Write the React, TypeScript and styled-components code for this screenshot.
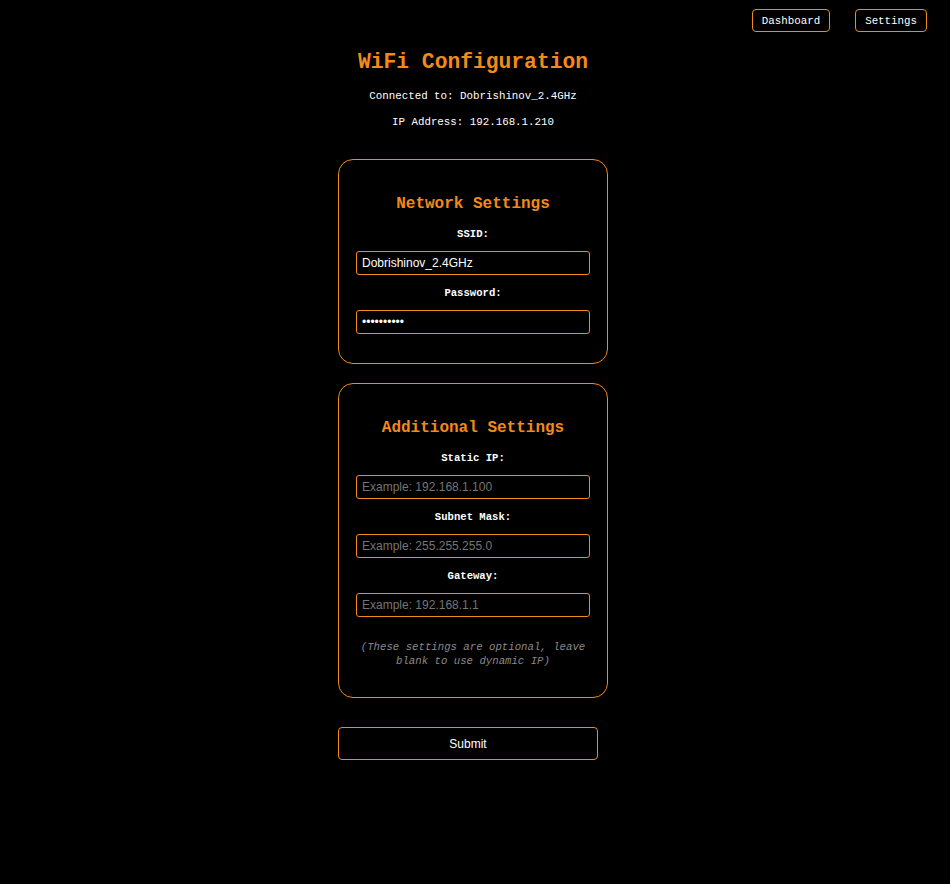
import React from 'react';
import styled, { createGlobalStyle } from 'styled-components';

const orange = '#f28a1a';
const mono = '"Liberation Mono", "DejaVu Sans Mono", monospace';
const sans = '"Liberation Sans", Arial, sans-serif';

const GlobalStyle = createGlobalStyle`
  html, body {
    margin: 0;
    padding: 0;
    background: #000;
    color: #fff;
    font-family: ${mono};
  }
  * { box-sizing: border-box; }
`;

const Page = styled.div`
  min-height: 884px;
  background: #000;
  padding-bottom: 40px;
`;

const Nav = styled.nav`
  display: flex;
  justify-content: flex-end;
  gap: 25px;
  padding: 9px 23px 0 0;
`;

const NavButton = styled.button`
  height: 23px;
  padding: 0 9px;
  background: #000;
  color: #fff;
  border: 1px solid ${orange};
  border-radius: 4px;
  font-family: ${mono};
  font-size: 10.8px;
  cursor: pointer;
`;

const Main = styled.main`
  width: 270px;
  margin: 18px auto 0;
  display: flex;
  flex-direction: column;
  align-items: center;
  transform: translateX(-2px);
`;

const Title = styled.h1`
  margin: 0;
  font-size: 21.3px;
  line-height: 24px;
  font-weight: bold;
  color: ${orange};
  white-space: nowrap;
`;

const Info = styled.p<{ $top: number }>`
  margin: ${(p) => p.$top}px 0 0;
  font-size: 10.8px;
  line-height: 14px;
  white-space: nowrap;
`;

const Card = styled.section<{ $top: number }>`
  width: 270px;
  margin-top: ${(p) => p.$top}px;
  padding: 34px 17px 29px;
  border: 1px solid ${orange};
  border-radius: 15px;
  display: flex;
  flex-direction: column;
  align-items: center;
`;

const CardTitle = styled.h2`
  margin: 0 0 2px;
  font-size: 16px;
  line-height: 20px;
  font-weight: bold;
  color: ${orange};
  white-space: nowrap;
`;

const Label = styled.label`
  display: block;
  margin-top: 11px;
  font-size: 10.6px;
  line-height: 14px;
  font-weight: bold;
  text-align: center;
`;

const Input = styled.input`
  display: block;
  width: 100%;
  height: 24px;
  margin-top: 10px;
  padding: 0 5px;
  background: #000;
  color: #fff;
  border: 1px solid ${orange};
  border-radius: 3px;
  font-family: ${sans};
  font-size: 12px;
  outline: none;

  &::placeholder {
    color: #757575;
  }
`;

const Note = styled.p`
  margin: 23px 0 0;
  font-size: 10.7px;
  line-height: 14px;
  font-style: italic;
  color: #8a8a8a;
  text-align: center;
`;

const SubmitButton = styled.button`
  width: 260px;
  height: 33px;
  margin: 29px 10px 0 0;
  background: #000;
  color: #fff;
  border: 1px solid ${orange};
  border-radius: 4px;
  font-family: ${sans};
  font-size: 12px;
  cursor: pointer;
`;

function Field({ label, value, placeholder, type = 'text' }: { label: string; value?: string; placeholder?: string; type?: string }) {
  return (
    <>
      <Label>{label}</Label>
      <Input type={type} defaultValue={value} placeholder={placeholder} />
    </>
  );
}

function App() {
  return (
    <Page>
      <GlobalStyle />
      <Nav>
        <NavButton>Dashboard</NavButton>
        <NavButton>Settings</NavButton>
      </Nav>
      <Main>
        <Title>WiFi Configuration</Title>
        <Info $top={15}>Connected to: Dobrishinov_2.4GHz</Info>
        <Info $top={12}>IP Address: 192.168.1.210</Info>

        <Card $top={30}>
          <CardTitle>Network Settings</CardTitle>
          <Field label="SSID:" value="Dobrishinov_2.4GHz" />
          <Field label="Password:" value="password12" type="password" />
        </Card>

        <Card $top={19}>
          <CardTitle>Additional Settings</CardTitle>
          <Field label="Static IP:" placeholder="Example: 192.168.1.100" />
          <Field label="Subnet Mask:" placeholder="Example: 255.255.255.0" />
          <Field label="Gateway:" placeholder="Example: 192.168.1.1" />
          <Note>
            (These settings are optional, leave
            <br />
            blank to use dynamic IP)
          </Note>
        </Card>

        <SubmitButton>Submit</SubmitButton>
      </Main>
    </Page>
  );
}

export default App;
